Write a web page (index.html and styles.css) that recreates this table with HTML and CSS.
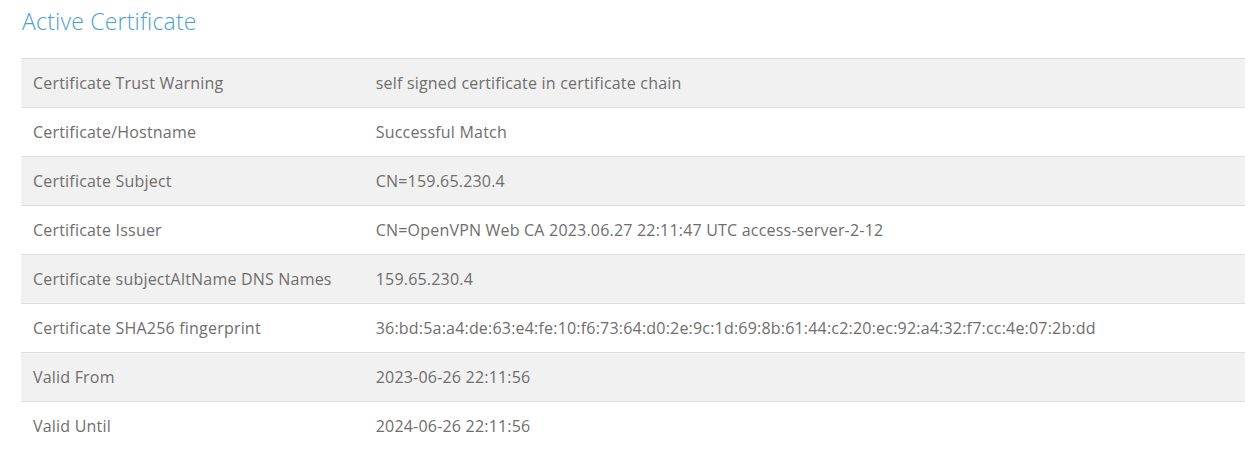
FILE: index.html
```html
<!DOCTYPE html>
<html>
<head>
<meta charset="utf-8">
<link rel="stylesheet" href="styles.css">
</head>
<body>
<div class="page">
  <h2 class="title">Active Certificate</h2>
  <table class="cert">
    <tbody>
      <tr><td class="k">Certificate Trust Warning</td><td>self signed certificate in certificate chain</td></tr>
      <tr><td class="k">Certificate/Hostname</td><td>Successful Match</td></tr>
      <tr><td class="k">Certificate Subject</td><td>CN=159.65.230.4</td></tr>
      <tr><td class="k">Certificate Issuer</td><td>CN=OpenVPN Web CA 2023.06.27 22:11:47 UTC access-server-2-12</td></tr>
      <tr><td class="k">Certificate subjectAltName DNS Names</td><td>159.65.230.4</td></tr>
      <tr><td class="k">Certificate SHA256 fingerprint</td><td>36:bd:5a:a4:de:63:e4:fe:10:f6:73:64:d0:2e:9c:1d:69:8b:61:44:c2:20:ec:92:a4:32:f7:cc:4e:07:2b:dd</td></tr>
      <tr><td class="k">Valid From</td><td>2023-06-26 22:11:56</td></tr>
      <tr><td class="k">Valid Until</td><td>2024-06-26 22:11:56</td></tr>
    </tbody>
  </table>
</div>
</body>
</html>
```
FILE: styles.css
```css
html, body {
  margin: 0;
  padding: 0;
  background: #fff;
}
.page {
  padding: 0 13px 0 21px;
  font-family: "Open Sans", "DejaVu Sans", sans-serif;
  color: #6f6d6d;
}
.title {
  margin: 0;
  padding: 6px 0 0 1px;
  height: 58px;
  box-sizing: border-box;
  font-family: "Open Sans", sans-serif;
  font-weight: 300;
  font-size: 23px;
  letter-spacing: 0.2px;
  line-height: 30px;
  color: #4b9fcf;
}
.cert {
  width: 100%;
  border-collapse: collapse;
  font-size: 16px;
  letter-spacing: 0.2px;
}
.cert tr {
  border-top: 1px solid #dedede;
  height: 49px;
}
.cert tr:nth-child(odd) {
  background: #f1f1f1;
}
.cert td {
  padding: 0 12px;
  vertical-align: middle;
}
.cert td.k {
  width: 28%;
  box-sizing: border-box;
}
```
